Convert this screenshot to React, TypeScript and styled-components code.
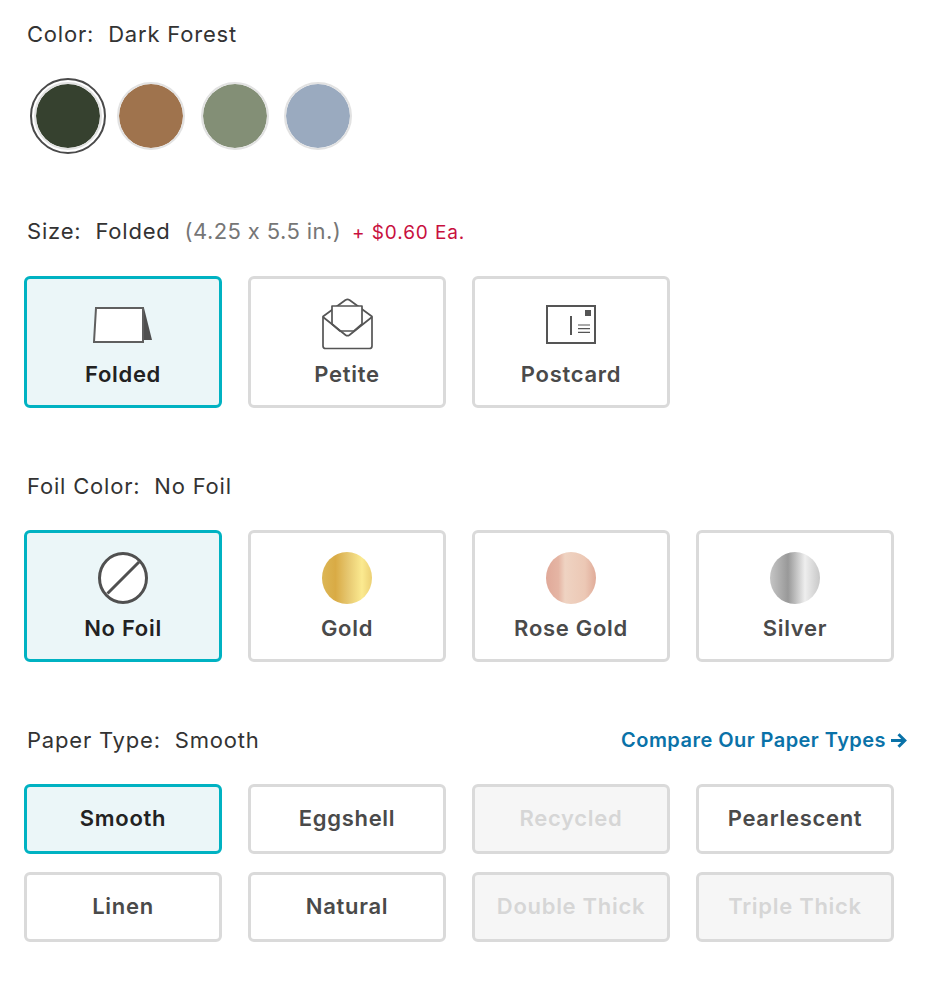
import styled, { createGlobalStyle } from 'styled-components';

const GlobalStyle = createGlobalStyle`
  html, body { margin: 0; padding: 0; background: #fff; }
  body {
    font-family: Inter, "Liberation Sans", sans-serif;
    font-feature-settings: "calt" 0;
    color: #333;
  }
  * { box-sizing: border-box; }
`;

const Page = styled.div`
  width: 946px;
  height: 988px;
  padding: 20px 24px 0 24px;
`;

const Section = styled.section`
  margin-bottom: 64px;
`;

const LabelRow = styled.div`
  display: flex;
  align-items: center;
  justify-content: space-between;
  height: 28px;
  padding-left: 3px;
  width: 883px;
`;

const Label = styled.div`
  font-size: 22px;
  line-height: 28px;
  letter-spacing: 0.8px;
  color: #333;
  white-space: pre;
`;

const Muted = styled.span`
  color: #767676;
  letter-spacing: 0.4px;
`;

const Price = styled.span`
  color: #c8103e;
  font-size: 19px;
  letter-spacing: 0.9px;
  margin-left: 4px;
`;

const CompareLink = styled.a`
  font-size: 20px;
  font-weight: 600;
  letter-spacing: 0.45px;
  color: #0a72a8;
  display: flex;
  align-items: center;
  gap: 5px;
`;

const Swatches = styled.div`
  display: flex;
  align-items: center;
  gap: 15.4px;
  margin-top: 30px;
  padding-left: 10px;
`;

const SwatchRing = styled.div<{ $selected?: boolean }>`
  width: 76px;
  height: 76px;
  margin: 0 -4px;
  border-radius: 50%;
  display: flex;
  align-items: center;
  justify-content: center;
  border: 2px solid ${(p) => (p.$selected ? '#4a4a4a' : 'transparent')};
`;

const Swatch = styled.div<{ $color: string }>`
  width: 68px;
  height: 68px;
  flex: none;
  border-radius: 50%;
  background: ${(p) => p.$color};
  background-clip: padding-box;
  border: 2px solid #e2e2e2;
`;

const OptionGrid = styled.div`
  display: grid;
  grid-template-columns: repeat(4, 198px);
  column-gap: 26px;
  row-gap: 18px;
  margin-top: 30px;
`;

const OptionCard = styled.div<{ $selected?: boolean; $disabled?: boolean; $tall?: boolean }>`
  height: ${(p) => (p.$tall ? 132 : 70)}px;
  border-radius: 6px;
  border: 3px solid ${(p) => (p.$selected ? '#00b2c2' : '#dadada')};
  background: ${(p) => (p.$selected ? '#ebf6f8' : p.$disabled ? '#f6f6f6' : '#fff')};
  color: ${(p) => (p.$disabled ? '#d6d6d6' : p.$selected ? '#222' : '#4a4a4a')};
  display: flex;
  flex-direction: column;
  align-items: center;
  justify-content: ${(p) => (p.$tall ? 'flex-start' : 'center')};
  padding: ${(p) => (p.$tall ? '19px 0 0' : '0 0 2px')};
  font-size: 22px;
  font-weight: 600;
  letter-spacing: 0.7px;
  line-height: 28px;
`;

const IconSlot = styled.div`
  height: 52px;
  margin-bottom: 10px;
  display: flex;
  align-items: center;
  justify-content: center;
`;

const FoilDot = styled.div<{ $bg: string }>`
  width: 50px;
  height: 52px;
  border-radius: 50%;
  background: ${(p) => p.$bg};
`;

const FoldedIcon = () => (
  <svg width="60" height="38" viewBox="0 0 60 38" fill="none" stroke="#5f5f5f" strokeWidth="2">
    <path d="M3 3H50V37H1Z" fill="#fff" />
    <path d="M51 3L59 35H51Z" fill="#4f4f4f" stroke="none" />
  </svg>
);

const PetiteIcon = () => (
  <svg width="51" height="52" viewBox="0 0 51 52" fill="#fff" stroke="#555" strokeWidth="1.7" strokeLinejoin="round">
    <path d="M1 18.5L23.5 2Q25.5 0.8 27.5 2L50 18.5V48Q50 50.5 47.5 50.5H3.5Q1 50.5 1 48Z" />
    <path d="M10 8H40V26L32 33H18L10 26Z" />
    <path d="M1 19L23.5 37Q25.5 38.4 27.5 37L50 19" fill="none" />
  </svg>
);

const PostcardIcon = () => (
  <svg width="50" height="39" viewBox="0 0 50 39" fill="none" stroke="#555" strokeWidth="2">
    <rect x="1" y="1" width="48" height="37" />
    <rect x="39" y="5" width="6" height="6" fill="#555" stroke="none" />
    <path d="M25 11V30" />
    <path d="M32 20H44M32 23.7H44M32 27.4H44" strokeWidth="1.2" />
  </svg>
);

const NoFoilIcon = () => (
  <svg width="50" height="52" viewBox="0 0 50 52" fill="#fff" stroke="#505050" strokeWidth="3">
    <ellipse cx="25" cy="26" rx="23.5" ry="24.5" />
    <path d="M9.5 41.5L41 10" />
  </svg>
);

const ArrowIcon = () => (
  <svg width="16" height="15" viewBox="0 0 16 15" fill="none" stroke="#0a72a8" strokeWidth="3">
    <path d="M0 7.5H13.5M7.5 1.2L13.8 7.5L7.5 13.8" />
  </svg>
);

const gold = 'linear-gradient(90deg, #dcb655 0%, #d9ab45 27%, #e6c770 52%, #fbea90 80%, #ecd074 100%)';
const rose = 'linear-gradient(90deg, #e0a999 0%, #e5b5a4 25%, #efd3c2 38%, #ecc8b5 78%, #e0ab99 100%)';
const silver = 'linear-gradient(90deg, #c5c5c5 0%, #999 36%, #eee 70%, #c8c8c8 100%)';

const colors = [
  { color: '#36412f', selected: true },
  { color: '#9f734d' },
  { color: '#838f76' },
  { color: '#9aaabf' },
];

const papers = [
  { name: 'Smooth', selected: true },
  { name: 'Eggshell' },
  { name: 'Recycled', disabled: true },
  { name: 'Pearlescent' },
  { name: 'Linen' },
  { name: 'Natural' },
  { name: 'Double Thick', disabled: true },
  { name: 'Triple Thick', disabled: true },
];

export default function App() {
  return (
    <Page>
      <GlobalStyle />
      <Section>
        <LabelRow>
          <Label>{'Color:  Dark Forest'}</Label>
        </LabelRow>
        <Swatches>
          {colors.map((c) => (
            <SwatchRing key={c.color} $selected={c.selected}>
              <Swatch $color={c.color} />
            </SwatchRing>
          ))}
        </Swatches>
      </Section>

      <Section>
        <LabelRow>
          <Label>
            {'Size:  Folded  '}
            <Muted>(4.25 x 5.5 in.)</Muted>
            {' '}
            <Price>+ $0.60 Ea.</Price>
          </Label>
        </LabelRow>
        <OptionGrid>
          <OptionCard $tall $selected>
            <IconSlot><FoldedIcon /></IconSlot>
            Folded
          </OptionCard>
          <OptionCard $tall>
            <IconSlot><PetiteIcon /></IconSlot>
            Petite
          </OptionCard>
          <OptionCard $tall>
            <IconSlot><PostcardIcon /></IconSlot>
            Postcard
          </OptionCard>
        </OptionGrid>
      </Section>

      <Section>
        <LabelRow>
          <Label>{'Foil Color:  No Foil'}</Label>
        </LabelRow>
        <OptionGrid>
          <OptionCard $tall $selected>
            <IconSlot><NoFoilIcon /></IconSlot>
            No Foil
          </OptionCard>
          <OptionCard $tall>
            <IconSlot><FoilDot $bg={gold} /></IconSlot>
            Gold
          </OptionCard>
          <OptionCard $tall>
            <IconSlot><FoilDot $bg={rose} /></IconSlot>
            Rose Gold
          </OptionCard>
          <OptionCard $tall>
            <IconSlot><FoilDot $bg={silver} /></IconSlot>
            Silver
          </OptionCard>
        </OptionGrid>
      </Section>

      <Section>
        <LabelRow>
          <Label>{'Paper Type:  Smooth'}</Label>
          <CompareLink>
            Compare Our Paper Types
            <ArrowIcon />
          </CompareLink>
        </LabelRow>
        <OptionGrid>
          {papers.map((p) => (
            <OptionCard key={p.name} $selected={p.selected} $disabled={p.disabled}>
              {p.name}
            </OptionCard>
          ))}
        </OptionGrid>
      </Section>
    </Page>
  );
}
